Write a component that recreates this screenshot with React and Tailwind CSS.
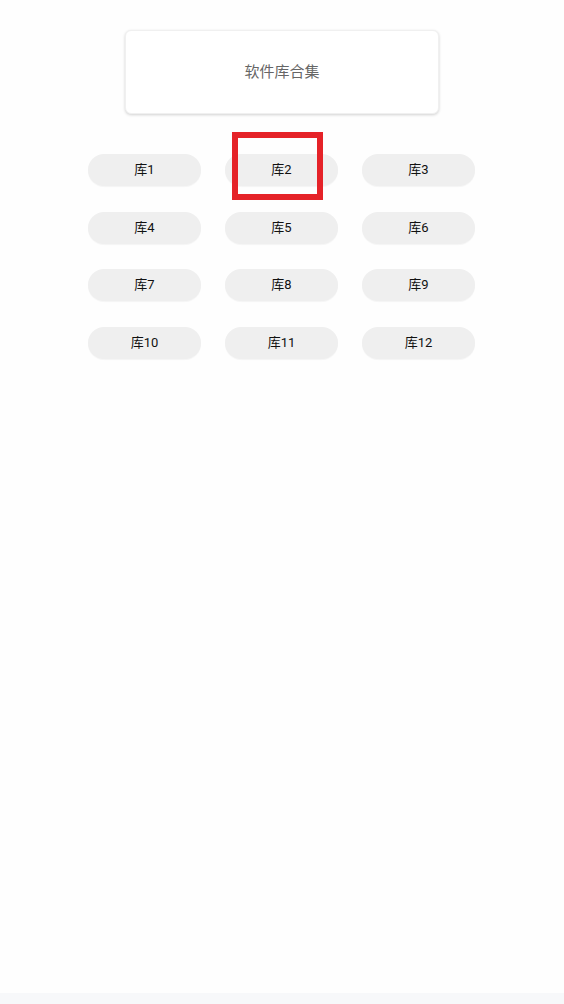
import React from "react";

const libs = Array.from({ length: 12 }, (_, i) => `库${i + 1}`);

export default function App() {
  return (
    <div
      className="relative flex min-h-[1004px] flex-col bg-[#fefefe]"
      style={{ fontFamily: '"Roboto", "Noto Sans CJK SC", sans-serif' }}
    >
      <div className="flex flex-1 flex-col items-center pt-[30px]">
        <div className="flex h-[84px] w-[314px] items-center justify-center rounded-[6px] border border-[#f0f0f0] bg-white shadow-[0_1px_3px_rgba(0,0,0,0.18)]">
          <span className="text-[15px] text-[#666666]">软件库合集</span>
        </div>

        <div className="mt-[40px] mr-[1px] grid grid-cols-[113px_113px_113px] gap-x-[24px] gap-y-[25.5px]">
          {libs.map((name) => (
            <button
              key={name}
              className="flex h-[32px] items-center justify-center rounded-full bg-[#efefef] text-[13px] text-[#111111] shadow-[0_1px_1px_rgba(0,0,0,0.04)]"
            >
              {name}
            </button>
          ))}
        </div>
      </div>

      <div className="h-[11px] bg-[#f7f8fa]" />

      {/* annotation box */}
      <div className="pointer-events-none absolute left-[232px] top-[132px] h-[68px] w-[91px] border-[6px] border-[#e52228]" />
    </div>
  );
}
